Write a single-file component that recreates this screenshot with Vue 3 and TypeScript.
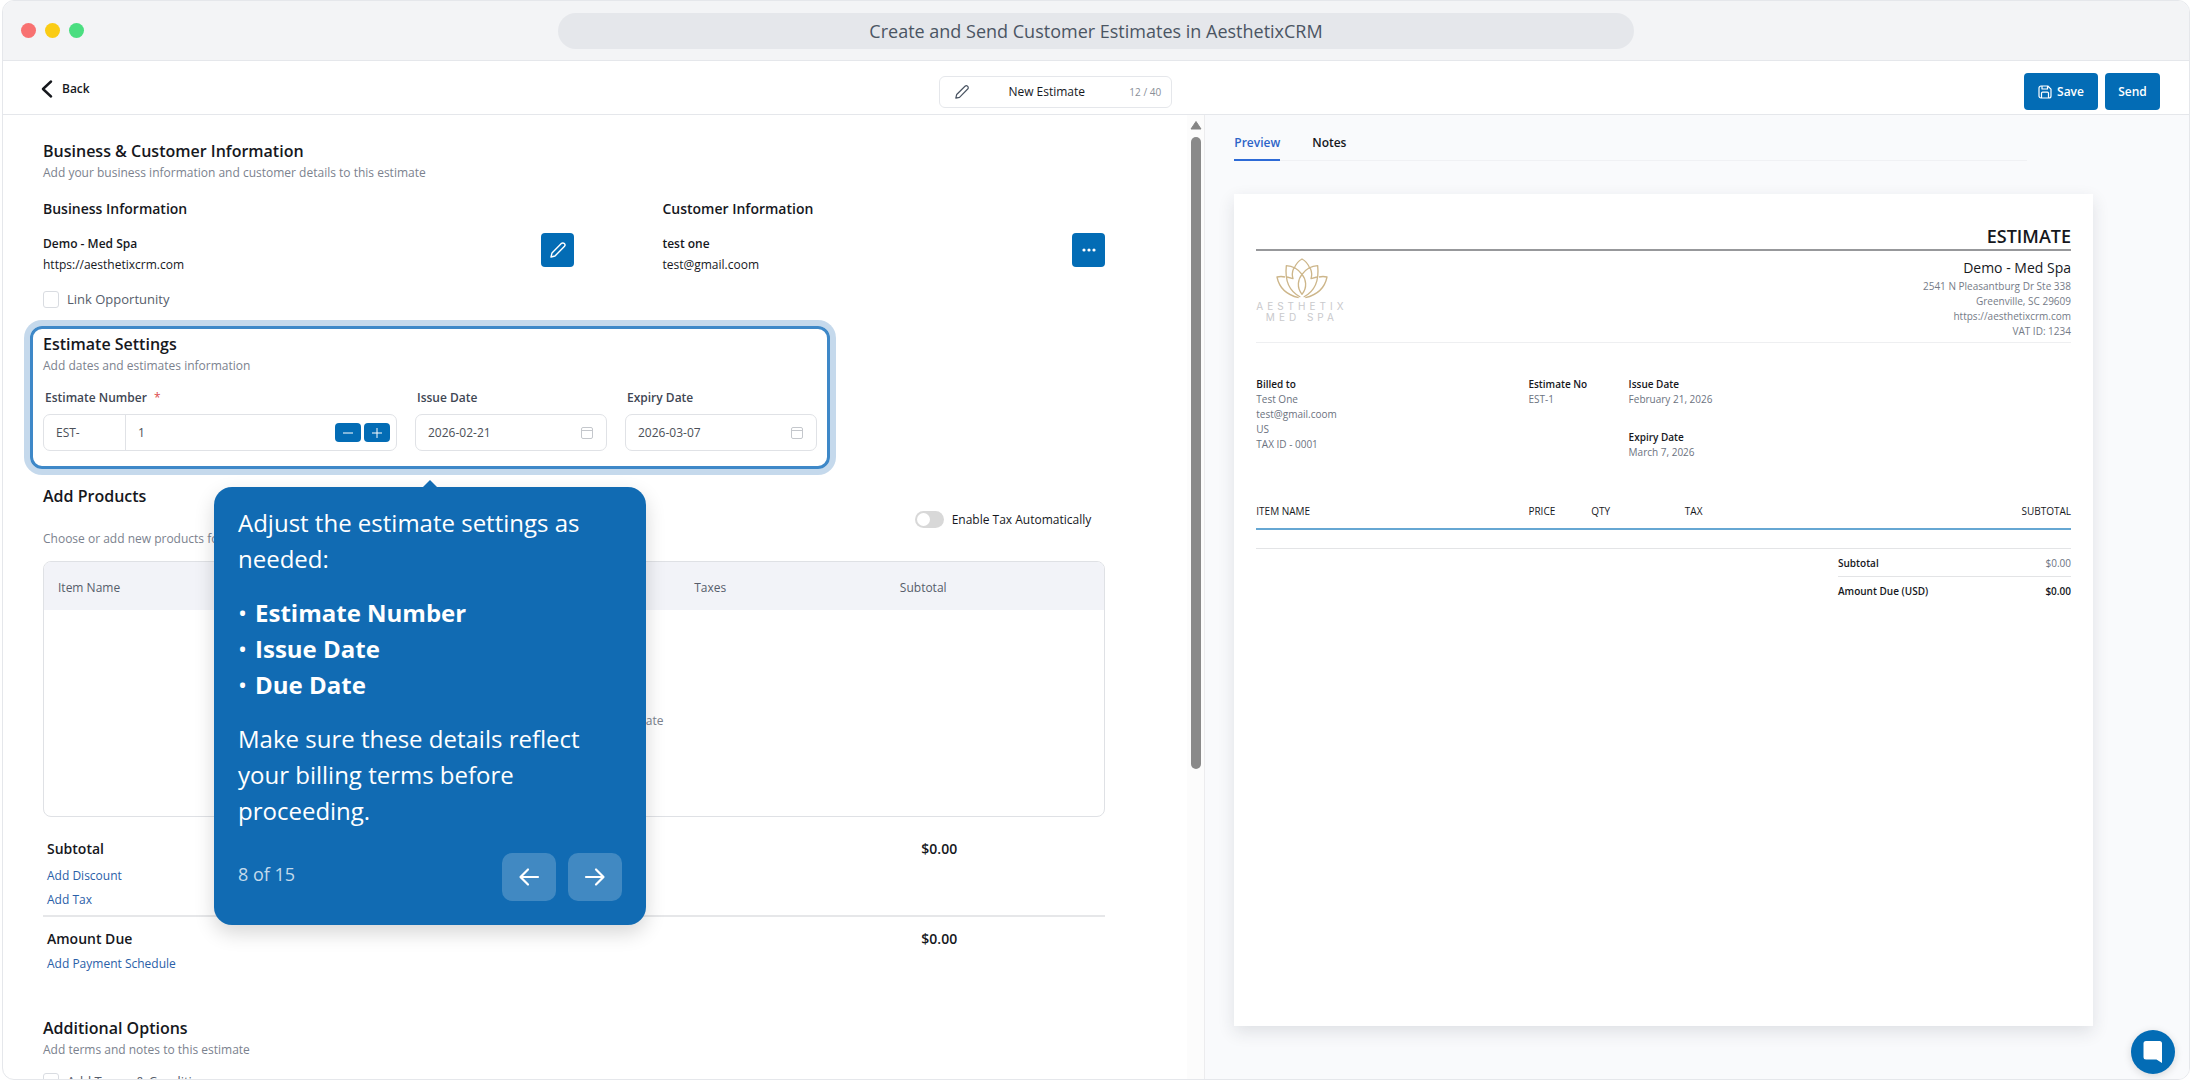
<script setup lang="ts">
import { ref } from 'vue'

const estimateName = ref('New Estimate')
const prefix = ref('EST-')
const estimateNumber = ref(1)
const issueDate = ref('2026-02-21')
const expiryDate = ref('2026-03-07')
const linkOpportunity = ref(false)
const autoTax = ref(false)
const addTerms = ref(false)

const highlights: string[] = ['Estimate Number', 'Issue Date', 'Due Date']
const address: string[] = [
  '2541 N Pleasantburg Dr Ste 338',
  'Greenville, SC 29609',
  'https://aesthetixcrm.com',
  'VAT ID: 1234',
]
const billedTo: string[] = ['Test One', 'test@gmail.coom', 'US', 'TAX ID - 0001']
</script>

<template>
  <div class="window">
    <header class="titlebar">
      <div class="lights">
        <span class="light red"></span>
        <span class="light yellow"></span>
        <span class="light green"></span>
      </div>
      <div class="address">Create and Send Customer Estimates in AesthetixCRM</div>
    </header>

    <div class="toolbar">
      <button type="button" class="back">
        <svg width="12" height="18" viewBox="0 0 12 18" fill="none" stroke="currentColor" stroke-width="2.4" stroke-linecap="round" stroke-linejoin="round" aria-hidden="true"><path d="M10 1.5 2 9l8 7.5" /></svg>
        Back
      </button>
      <label class="name-box">
        <svg width="16" height="16" viewBox="0 0 16 16" fill="none" stroke="#4b5563" stroke-width="1.2" stroke-linejoin="round" aria-hidden="true"><path d="M1.8 14.2l.9-3.7 8.3-8.2a1.9 1.9 0 0 1 2.7 2.7l-8.2 8.3z" /></svg>
        <input v-model="estimateName" class="name-input" type="text" aria-label="Estimate name" />
        <span class="count">12 / 40</span>
      </label>
      <div class="actions">
        <button type="button" class="primary save">
          <svg width="14" height="14" viewBox="0 0 14 14" fill="none" stroke="currentColor" stroke-width="1.2" stroke-linejoin="round" aria-hidden="true"><path d="M1 3a2 2 0 0 1 2-2h6.8L13 4.2V11a2 2 0 0 1-2 2H3a2 2 0 0 1-2-2zM4 1v3h5.500V1.200M3.500 13V8.200a1 1 0 0 1 1-1h5a1 1 0 0 1 1 1V13" /></svg>
          Save
        </button>
        <button type="button" class="primary send">Send</button>
      </div>
    </div>

    <div class="body">
      <main class="form">
        <div class="form-content">
          <section>
            <h2>Business &amp; Customer Information</h2>
            <p class="hint">Add your business information and customer details to this estimate</p>
            <div class="parties">
              <div>
                <h3>Business Information</h3>
                <div class="party">
                  <div>
                    <p class="strong">Demo - Med Spa</p>
                    <p>https://aesthetixcrm.com</p>
                  </div>
                  <button type="button" class="square" aria-label="Edit business">
                    <svg width="18" height="18" viewBox="0 0 18 18" fill="none" stroke="currentColor" stroke-width="1.4" stroke-linejoin="round" aria-hidden="true"><path d="M2 16l1-4.100 9.300-9.300a2.100 2.100 0 0 1 3 3L6 15z" /></svg>
                  </button>
                </div>
              </div>
              <div>
                <h3>Customer Information</h3>
                <div class="party">
                  <div>
                    <p class="strong">test one</p>
                    <p>test@gmail.coom</p>
                  </div>
                  <button type="button" class="square" aria-label="Customer actions">
                    <svg width="16" height="4" viewBox="0 0 16 4" fill="currentColor" aria-hidden="true"><circle cx="3" cy="2" r="1.600" /><circle cx="8" cy="2" r="1.600" /><circle cx="13" cy="2" r="1.600" /></svg>
                  </button>
                </div>
              </div>
            </div>
            <label class="check"><input v-model="linkOpportunity" type="checkbox" />Link Opportunity</label>
          </section>

          <section class="settings">
            <h2>Estimate Settings</h2>
            <p class="hint">Add dates and estimates information</p>
            <div class="fields">
              <div class="field">
                <label for="est-number">Estimate Number <span class="req">*</span></label>
                <div class="control number">
                  <input v-model="prefix" class="prefix" type="text" aria-label="Estimate prefix" />
                  <input id="est-number" v-model="estimateNumber" type="text" inputmode="numeric" />
                  <button type="button" class="step" aria-label="Decrease" @click="estimateNumber--">
                    <svg width="12" height="12" viewBox="0 0 12 12" stroke="currentColor" aria-hidden="true"><path d="M1 6h10" /></svg>
                  </button>
                  <button type="button" class="step" aria-label="Increase" @click="estimateNumber++">
                    <svg width="12" height="12" viewBox="0 0 12 12" stroke="currentColor" aria-hidden="true"><path d="M1 6h10M6 1v10" /></svg>
                  </button>
                </div>
              </div>
              <div class="field">
                <label for="issue">Issue Date</label>
                <div class="control date">
                  <input id="issue" v-model="issueDate" type="text" />
                  <svg width="14" height="14" viewBox="0 0 14 14" fill="none" stroke="#c4c7cc" aria-hidden="true"><rect x="1.500" y="1.500" width="11" height="11" rx="1.500" /><path d="M1.500 4.500h11" /></svg>
                </div>
              </div>
              <div class="field">
                <label for="expiry">Expiry Date</label>
                <div class="control date">
                  <input id="expiry" v-model="expiryDate" type="text" />
                  <svg width="14" height="14" viewBox="0 0 14 14" fill="none" stroke="#c4c7cc" aria-hidden="true"><rect x="1.500" y="1.500" width="11" height="11" rx="1.500" /><path d="M1.500 4.500h11" /></svg>
                </div>
              </div>
            </div>

            <aside class="tip" role="dialog" aria-label="Guide step">
              <p>Adjust the estimate settings as needed:</p>
              <ul>
                <li v-for="item in highlights" :key="item"><strong>{{ item }}</strong></li>
              </ul>
              <p>Make sure these details reflect your billing terms before proceeding.</p>
              <div class="tip-footer">
                <span class="progress">8 of 15</span>
                <button type="button" aria-label="Previous">
                  <svg width="24" height="24" viewBox="0 0 24 24" fill="none" stroke="currentColor" stroke-width="2.200" stroke-linecap="round" stroke-linejoin="round" aria-hidden="true"><path d="M21 12H4M11 4.500 3.500 12l7.500 7.500" /></svg>
                </button>
                <button type="button" aria-label="Next">
                  <svg width="24" height="24" viewBox="0 0 24 24" fill="none" stroke="currentColor" stroke-width="2.200" stroke-linecap="round" stroke-linejoin="round" aria-hidden="true"><path d="M3 12h17M13 4.500l7.500 7.500-7.500 7.500" /></svg>
                </button>
              </div>
            </aside>
          </section>

          <section class="products">
            <div class="products-head">
              <div>
                <h2>Add Products</h2>
                <p class="hint">Choose or add new products for this estimate</p>
              </div>
              <label class="toggle"><input v-model="autoTax" type="checkbox" role="switch" />Enable Tax Automatically</label>
            </div>
            <div class="items-frame">
              <table class="items">
                <colgroup>
                  <col class="c-name" /><col class="c-price" /><col class="c-qty" /><col class="c-tax" /><col class="c-subtotal" />
                </colgroup>
                <thead>
                  <tr><th>Item Name</th><th>Price</th><th>Quantity</th><th>Taxes</th><th>Subtotal</th></tr>
                </thead>
                <tbody>
                  <tr><td colspan="5">No items added to this estimate</td></tr>
                </tbody>
              </table>
            </div>
            <div class="totals first">
              <div class="total"><span>Subtotal</span><span>$0.00</span></div>
              <a href="#discount">Add Discount</a>
              <a href="#tax">Add Tax</a>
            </div>
            <div class="totals second">
              <div class="total"><span>Amount Due</span><span>$0.00</span></div>
              <a href="#schedule">Add Payment Schedule</a>
            </div>
          </section>

          <section class="options">
            <h2>Additional Options</h2>
            <p class="hint">Add terms and notes to this estimate</p>
            <label class="check"><input v-model="addTerms" type="checkbox" />Add Terms &amp; Conditions</label>
          </section>
        </div>
        <div class="scrollbar" aria-hidden="true">
          <svg width="12" height="9" viewBox="0 0 12 9" fill="#858585"><path d="M6 .5 11 8H1z" stroke="#858585" stroke-linejoin="round" /></svg>
          <div class="thumb"></div>
        </div>
      </main>

      <section class="preview">
        <nav class="tabs">
          <a href="#preview" class="active">Preview</a>
          <a href="#notes">Notes</a>
        </nav>
        <article class="paper">
          <h1>ESTIMATE</h1>
          <div class="letterhead">
            <div class="logo">
              <svg width="52" height="42" viewBox="0 0 156 126" fill="none" stroke="#cdb68a" stroke-width="4" stroke-linejoin="round" aria-hidden="true">
                <path d="M54 35C60 20 68 11 78 6c10 5 18 14 24 29" />
                <path d="M78 52C66 66 61 92 78 112c17-20 12-46 0-60z" />
                <path d="M78 52C66 36 50 27 31 26c-5 46 10 78 42 94" />
                <path d="M78 52c12-16 28-25 47-26 5 46-10 78-42 94" />
                <path d="M53 34C48 46 48 56 51 65L33 60" />
                <path d="M103 34c5 12 5 22 2 31l18-5" />
                <path d="M27 60c-8-2-16-2-24 0 6 30 27 53 65 62" />
                <path d="M129 60c8-2 16-2 24 0-6 30-27 53-65 62" />
              </svg>
              <span>AESTHETIX</span>
              <span>MED SPA</span>
            </div>
            <div class="sender">
              <p class="sender-name">Demo - Med Spa</p>
              <p v-for="line in address" :key="line">{{ line }}</p>
            </div>
          </div>
          <div class="meta">
            <div>
              <h4>Billed to</h4>
              <p v-for="line in billedTo" :key="line">{{ line }}</p>
            </div>
            <div>
              <h4>Estimate No</h4>
              <p>EST-1</p>
            </div>
            <div class="dates">
              <div>
                <h4>Issue Date</h4>
                <p>February 21, 2026</p>
              </div>
              <div>
                <h4>Expiry Date</h4>
                <p>March 7, 2026</p>
              </div>
            </div>
          </div>
          <table class="lines">
            <colgroup>
              <col class="l-name" /><col class="l-price" /><col class="l-qty" /><col /><col />
            </colgroup>
            <thead>
              <tr><th>ITEM NAME</th><th>PRICE</th><th>QTY</th><th>TAX</th><th class="end">SUBTOTAL</th></tr>
            </thead>
            <tbody>
              <tr><td colspan="5"></td></tr>
            </tbody>
          </table>
          <div class="sum">
            <div class="sum-row"><strong>Subtotal</strong><span>$0.00</span></div>
            <div class="sum-row"><strong>Amount Due (USD)</strong><strong>$0.00</strong></div>
          </div>
        </article>
      </section>
    </div>

    <button type="button" class="chat" aria-label="Open chat">
      <svg width="20" height="22" viewBox="0 0 20 22" fill="#fff" aria-hidden="true"><path d="M3 0h13.500a2.500 2.500 0 0 1 2.500 2.500V22l-5.500-3.500H3A2.500 2.500 0 0 1 .5 16V2.500A2.500 2.500 0 0 1 3 0z" /></svg>
    </button>
  </div>
</template>

<style>
body {
  margin: 0;
  background: #fff;
}
</style>

<style scoped>
* {
  box-sizing: border-box;
}
h1, h2, h3, h4, p, ul {
  margin: 0;
  padding: 0;
}
button, input {
  font: inherit;
  color: inherit;
}
button {
  border: 0;
  padding: 0;
  background: none;
  cursor: pointer;
}
a {
  text-decoration: none;
}
svg {
  flex: none;
  display: block;
}
.window {
  position: relative;
  display: flex;
  flex-direction: column;
  height: 100vh;
  margin: 0 2px;
  border: 1px solid #e5e7eb;
  border-radius: 12px;
  overflow: hidden;
  background: #fff;
  color: #16181d;
  font: 13px/20px "Open Sans", "Noto Sans", sans-serif;
}

/* browser chrome */
.titlebar {
  display: grid;
  grid-template-columns: 1fr 1076px 1fr;
  align-items: center;
  flex: none;
  height: 60px;
  padding: 0 18px;
  background: #f3f4f6;
  border-bottom: 1px solid #e5e7eb;
}
.lights {
  display: flex;
  gap: 9px;
}
.light {
  width: 15px;
  height: 15px;
  border-radius: 50%;
}
.red { background: #f87171; }
.yellow { background: #facc15; }
.green { background: #4ade80; }
.address {
  height: 36px;
  border-radius: 18px;
  background: #e5e7eb;
  color: #4b5563;
  font-size: 18px;
  line-height: 36px;
  text-align: center;
}

/* toolbar */
.toolbar {
  display: grid;
  grid-template-columns: 10fr auto 11fr;
  align-items: center;
  flex: none;
  height: 54px;
  padding: 2px 29px 0 38px;
  border-bottom: 1px solid #e5e7eb;
}
.back {
  display: flex;
  align-items: center;
  justify-self: start;
  gap: 9px;
  font-size: 12px;
  font-weight: 600;
}
.name-box {
  display: flex;
  align-items: center;
  width: 233px;
  height: 32px;
  margin-top: 6px;
  padding: 0 10px 0 14px;
  border: 1px solid #e5e7eb;
  border-radius: 6px;
}
.name-input {
  flex: 1;
  min-width: 0;
  border: 0;
  padding: 0 6px 0 0;
  outline: 0;
  background: none;
  font-size: 12px;
  text-align: center;
}
.count {
  color: #8a8f98;
  font-size: 10px;
}
.actions {
  display: flex;
  justify-self: end;
  gap: 7px;
  margin-top: 6px;
}
.primary {
  display: flex;
  align-items: center;
  justify-content: center;
  gap: 5px;
  height: 37px;
  border-radius: 4px;
  background: #036cb5;
  color: #fff;
  font-size: 12px;
  font-weight: 600;
}
.save { width: 74px; }
.send { width: 55px; }

/* form */
.body {
  display: flex;
  flex: 1;
  min-height: 0;
}
.form {
  display: flex;
  flex: 0 0 55%;
  min-width: 0;
  overflow: hidden;
}
.form-content {
  flex: 1;
  min-width: 0;
  padding: 24px 82px 0 40px;
}
.scrollbar {
  display: flex;
  flex-direction: column;
  align-items: center;
  gap: 7px;
  flex: none;
  width: 18px;
  padding-top: 6px;
  background: #fcfcfc;
  border-right: 1px solid #ececee;
}
.thumb {
  width: 10px;
  height: 66%;
  border-radius: 5px;
  background: #8a8a8a;
}
h2 {
  font-size: 16px;
  line-height: 24px;
  font-weight: 600;
}
h3 {
  font-size: 14px;
  line-height: 20px;
  font-weight: 600;
}
.hint {
  color: #7b828e;
  font-size: 12px;
  line-height: 20px;
}
.parties {
  display: grid;
  grid-template-columns: 6fr 5fr;
  gap: 88px;
  margin-top: 16px;
}
.party {
  display: flex;
  justify-content: space-between;
  margin-top: 14px;
  font-size: 12px;
  line-height: 21px;
}
.strong {
  font-weight: 600;
}
.square {
  display: flex;
  align-items: center;
  justify-content: center;
  width: 33px;
  height: 34px;
  border-radius: 4px;
  background: #036cb5;
  color: #fff;
}
.check {
  display: flex;
  align-items: center;
  gap: 8px;
  margin-top: 15px;
  color: #565d6b;
  line-height: 18px;
}
.check input {
  appearance: none;
  width: 16px;
  height: 17px;
  margin: 0;
  border: 1px solid #d9dce1;
  border-radius: 3px;
  background: #fff;
}

/* highlighted settings */
.settings {
  position: relative;
  width: fit-content;
  margin: 18px 0 0 -13px;
  padding: 3px 10px 15px;
  border: 3px solid #3e88c8;
  border-radius: 12px;
  box-shadow: 0 0 0 6px #c5d9ec;
}
.fields {
  display: flex;
  gap: 18px;
  margin-top: 12px;
}
.field label {
  display: block;
  padding-left: 2px;
  color: #3f4754;
  font-size: 12px;
  line-height: 20px;
  font-weight: 600;
}
.req {
  margin-left: 4px;
  color: #dc4b4b;
  font-weight: 400;
}
.control {
  display: flex;
  align-items: center;
  height: 37px;
  margin-top: 6px;
  border: 1px solid #e0e2e6;
  border-radius: 7px;
  overflow: hidden;
  color: #4b5058;
  font-size: 12px;
}
.control input {
  flex: 1;
  min-width: 0;
  height: 100%;
  border: 0;
  padding: 0 12px;
  outline: 0;
  background: none;
}
.number {
  width: 354px;
  padding-right: 6px;
}
.control .prefix {
  flex: 0 0 82px;
  border-right: 1px solid #e0e2e6;
}
.step {
  display: flex;
  align-items: center;
  justify-content: center;
  width: 26px;
  height: 19px;
  margin-left: 3px;
  border-radius: 4px;
  background: #036cb5;
  color: #fff;
}
.date {
  width: 192px;
  padding-right: 12px;
}

/* guide */
.tip {
  position: absolute;
  z-index: 2;
  top: calc(100% + 21px);
  left: 50%;
  width: 432px;
  padding: 18px 24px 24px;
  border-radius: 18px;
  transform: translateX(-50%);
  background: #116bb3;
  box-shadow: 0 8px 20px rgba(0, 0, 0, 0.16);
  color: #fff;
  font-size: 24px;
  line-height: 36px;
}
.tip::before {
  content: "";
  position: absolute;
  top: -7px;
  left: 50%;
  width: 14px;
  height: 7px;
  transform: translateX(-50%);
  background: #116bb3;
  clip-path: polygon(50% 0, 100% 100%, 0 100%);
}
.tip ul {
  margin: 18px 0;
  list-style: none;
}
.tip li {
  display: flex;
  gap: 8px;
}
.tip li::before {
  content: "•";
}
.tip strong {
  font-weight: 700;
}
.tip-footer {
  display: flex;
  gap: 12px;
  margin-top: 24px;
}
.progress {
  flex: 1;
  color: #c3daec;
  font-size: 18px;
  line-height: 42px;
}
.tip-footer button {
  display: flex;
  align-items: center;
  justify-content: center;
  width: 54px;
  height: 48px;
  border-radius: 10px;
  background: #4189c2;
}

/* products */
.products {
  margin-top: 15px;
}
.products-head {
  display: flex;
  align-items: center;
  justify-content: space-between;
}
.products-head .hint {
  margin-top: 21px;
}
.toggle {
  display: flex;
  align-items: center;
  gap: 8px;
  padding: 6px 14px 0 0;
  font-size: 12px;
}
.toggle input {
  appearance: none;
  width: 29px;
  height: 17px;
  margin: 0;
  padding: 2px;
  border-radius: 9px;
  background: #d8d8d8;
}
.toggle input::before {
  content: "";
  display: block;
  width: 13px;
  height: 13px;
  border-radius: 50%;
  background: #fff;
}
.items-frame {
  margin-top: 12px;
  border: 1px solid #dfe1e5;
  border-radius: 8px;
  overflow: hidden;
}
.items {
  width: 100%;
  table-layout: fixed;
  border-collapse: collapse;
  font-size: 12px;
}
.items th {
  height: 48px;
  padding: 11px 14px 8px;
  background: #f2f3f8;
  color: #565d6b;
  font-weight: 400;
  text-align: left;
}
.items td {
  height: 206px;
  padding: 16px 0 0;
  color: #7b828e;
  text-align: center;
}
.c-name { width: 28%; }
.c-price { width: 16%; }
.c-qty { width: 16%; }
.c-tax { width: 19.4%; }
.c-subtotal { width: 20.6%; }
.totals {
  display: flex;
  flex-direction: column;
  align-items: flex-start;
  padding-left: 4px;
  font-size: 12px;
  line-height: 24px;
}
.totals a {
  color: #2a60a8;
}
.first {
  padding-top: 22px;
  padding-bottom: 3px;
  border-bottom: 2px solid #e6e7e9;
}
.second {
  padding-top: 12px;
}
.total {
  display: flex;
  align-self: stretch;
  justify-content: space-between;
  padding: 0 14% 5px 0;
  font-size: 14px;
  line-height: 20px;
  font-weight: 600;
}
.second .total {
  padding-bottom: 3px;
}
.options {
  margin-top: 40px;
}
.options .check {
  margin-top: 12px;
}

/* preview */
.preview {
  display: flex;
  flex-direction: column;
  flex: 1;
  min-width: 0;
  padding: 18px 96px 53px 29px;
  background: #f9fafc;
}
.tabs {
  display: flex;
  gap: 32px;
  margin-right: 66px;
  box-shadow: inset 0 -1px #f0f1f4;
  font-size: 12px;
  font-weight: 600;
}
.tabs a {
  padding-bottom: 8px;
  color: #16181d;
}
.tabs .active {
  color: #2d64c8;
  box-shadow: inset 0 -2px #2d6ad6;
}
.paper {
  flex: 1;
  min-height: 0;
  margin-top: 33px;
  padding: 29px 22px;
  background: #fff;
  box-shadow: 0 6px 16px rgba(30, 40, 60, 0.12);
  font-size: 10px;
  line-height: 15px;
}
h1 {
  border-bottom: 2px solid #97989b;
  font-size: 18px;
  line-height: 26px;
  font-weight: 600;
  text-align: right;
}
.letterhead {
  display: flex;
  justify-content: space-between;
  padding: 6px 0 3px;
  border-bottom: 1px solid #eeeff1;
}
.logo {
  display: flex;
  flex-direction: column;
  align-items: center;
  color: #c9c9cc;
  font-family: Inter, "Liberation Sans", sans-serif;
  line-height: 11px;
  letter-spacing: 4px;
}
.logo svg {
  margin-bottom: 2px;
}
.sender {
  color: #757b87;
  text-align: right;
}
.sender-name {
  color: #16181d;
  font-size: 14px;
  line-height: 22px;
}
.meta {
  display: grid;
  grid-template-columns: 33.4% 12.3% 1fr;
  margin-top: 34px;
  color: #6b7280;
}
h4 {
  color: #16181d;
  font-size: 10px;
  line-height: 15px;
  font-weight: 600;
}
.dates {
  display: flex;
  flex-direction: column;
  gap: 23px;
}
.lines {
  width: 100%;
  margin-top: 44px;
  table-layout: fixed;
  border-collapse: collapse;
}
.lines th {
  padding: 0 0 9px;
  border-bottom: 2px solid #66a7d3;
  font-weight: 500;
  text-align: left;
}
.lines .end {
  text-align: right;
}
.lines td {
  height: 19px;
  padding: 0;
  border-bottom: 1px solid #e3e4e6;
}
.l-name { width: 33.4%; }
.l-price { width: 7.7%; }
.l-qty { width: 11.5%; }
.sum {
  width: 233px;
  margin: 7px 0 0 auto;
}
.sum-row {
  display: flex;
  justify-content: space-between;
}
.sum-row + .sum-row {
  margin-top: 5px;
  padding-top: 7px;
  border-top: 1px solid #e3e4e6;
}
.sum-row span {
  color: #6b7280;
}
.sum-row strong {
  font-weight: 600;
}

.chat {
  position: absolute;
  right: 14px;
  bottom: 5px;
  display: flex;
  align-items: center;
  justify-content: center;
  width: 44px;
  height: 44px;
  border-radius: 50%;
  background: #036cb5;
  box-shadow: 0 2px 8px rgba(0, 0, 0, 0.14);
}
</style>
